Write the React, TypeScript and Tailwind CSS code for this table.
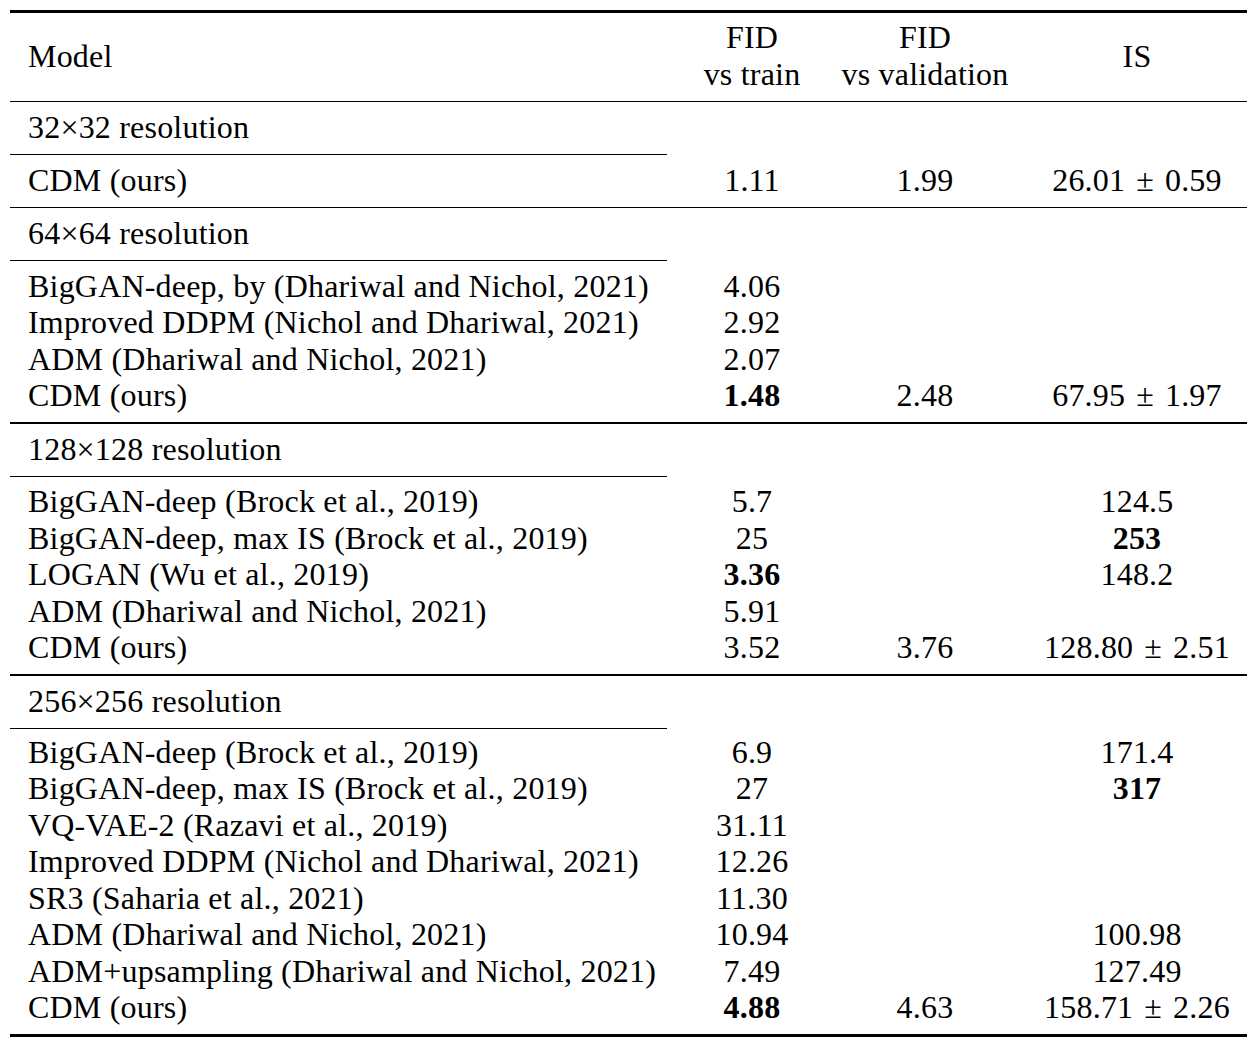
type Row = {
  model: string;
  train?: string;
  val?: string;
  is?: string;
  bt?: boolean;
  bi?: boolean;
};

type Section = { title: string; rows: Row[] };

const SECTIONS: Section[] = [
  {
    title: "32×32 resolution",
    rows: [{ model: "CDM (ours)", train: "1.11", val: "1.99", is: "26.01 ± 0.59" }],
  },
  {
    title: "64×64 resolution",
    rows: [
      { model: "BigGAN-deep, by (Dhariwal and Nichol, 2021)", train: "4.06" },
      { model: "Improved DDPM (Nichol and Dhariwal, 2021)", train: "2.92" },
      { model: "ADM (Dhariwal and Nichol, 2021)", train: "2.07" },
      { model: "CDM (ours)", train: "1.48", bt: true, val: "2.48", is: "67.95 ± 1.97" },
    ],
  },
  {
    title: "128×128 resolution",
    rows: [
      { model: "BigGAN-deep (Brock et al., 2019)", train: "5.7", is: "124.5" },
      { model: "BigGAN-deep, max IS (Brock et al., 2019)", train: "25", is: "253", bi: true },
      { model: "LOGAN (Wu et al., 2019)", train: "3.36", bt: true, is: "148.2" },
      { model: "ADM (Dhariwal and Nichol, 2021)", train: "5.91" },
      { model: "CDM (ours)", train: "3.52", val: "3.76", is: "128.80 ± 2.51" },
    ],
  },
  {
    title: "256×256 resolution",
    rows: [
      { model: "BigGAN-deep (Brock et al., 2019)", train: "6.9", is: "171.4" },
      { model: "BigGAN-deep, max IS (Brock et al., 2019)", train: "27", is: "317", bi: true },
      { model: "VQ-VAE-2 (Razavi et al., 2019)", train: "31.11" },
      { model: "Improved DDPM (Nichol and Dhariwal, 2021)", train: "12.26" },
      { model: "SR3 (Saharia et al., 2021)", train: "11.30" },
      { model: "ADM (Dhariwal and Nichol, 2021)", train: "10.94", is: "100.98" },
      { model: "ADM+upsampling (Dhariwal and Nichol, 2021)", train: "7.49", is: "127.49" },
      { model: "CDM (ours)", train: "4.88", bt: true, val: "4.63", is: "158.71 ± 2.26" },
    ],
  },
];

const GRID = "grid grid-cols-[657px_170px_176px_234px]";

// IS values with the ± spaced like a math binary operator
function IsCell({ value }: { value?: string }) {
  if (!value) return null;
  const parts = value.split(" ± ");
  if (parts.length < 2) return <>{value}</>;
  return (
    <>
      {parts[0]}
      <span className="mx-[11px]">±</span>
      {parts[1]}
    </>
  );
}

function DataRow({ row }: { row: Row }) {
  return (
    <div className={`${GRID} h-[36.5px] items-center leading-none`}>
      <div className="whitespace-nowrap pl-[18px]">{row.model}</div>
      <div className={`text-center ${row.bt ? "font-bold" : ""}`}>{row.train}</div>
      <div className="text-center">{row.val}</div>
      <div className={`whitespace-nowrap pl-[14px] text-center ${row.bi ? "font-bold" : ""}`}>
        <IsCell value={row.is} />
      </div>
    </div>
  );
}

export default function App() {
  return (
    <div className="min-h-[1044px] bg-white pt-[10px] text-black">
      <div
        className="ml-[10px] w-[1237px] text-[32px] tracking-[0.2px]"
        style={{ fontFamily: '"Liberation Serif", serif' }}
      >
        {/* toprule */}
        <div className="h-[2.5px] bg-black" />

        {/* Header */}
        <div className={`${GRID} h-[88px] items-center pb-[2px] leading-none`}>
          <div className="pl-[18px]">Model</div>
          <div className="flex flex-col items-center">
            <span className="flex h-[36.5px] items-center">FID</span>
            <span className="flex h-[36.5px] items-center">vs train</span>
          </div>
          <div className="flex flex-col items-center">
            <span className="flex h-[36.5px] items-center">FID</span>
            <span className="flex h-[36.5px] items-center">vs validation</span>
          </div>
          <div className="pl-[14px] text-center">IS</div>
        </div>

        {SECTIONS.map((s, i) => (
          <div key={s.title}>
            {/* midrule */}
            <div className="h-[1.5px] bg-black" />
            <div className="flex h-[52px] items-center pb-[2px] pl-[18px] leading-none">{s.title}</div>
            {/* cmidrule under the section title */}
            <div className="h-px w-[657px] bg-black" />
            <div className={i === SECTIONS.length - 1 ? "pb-[8.5px] pt-[5px]" : "pb-[8.5px] pt-[6.5px]"}>
              {s.rows.map((r, j) => (
                <DataRow key={j} row={r} />
              ))}
            </div>
          </div>
        ))}

        {/* bottomrule */}
        <div className="h-[2.5px] bg-black" />
      </div>
    </div>
  );
}
